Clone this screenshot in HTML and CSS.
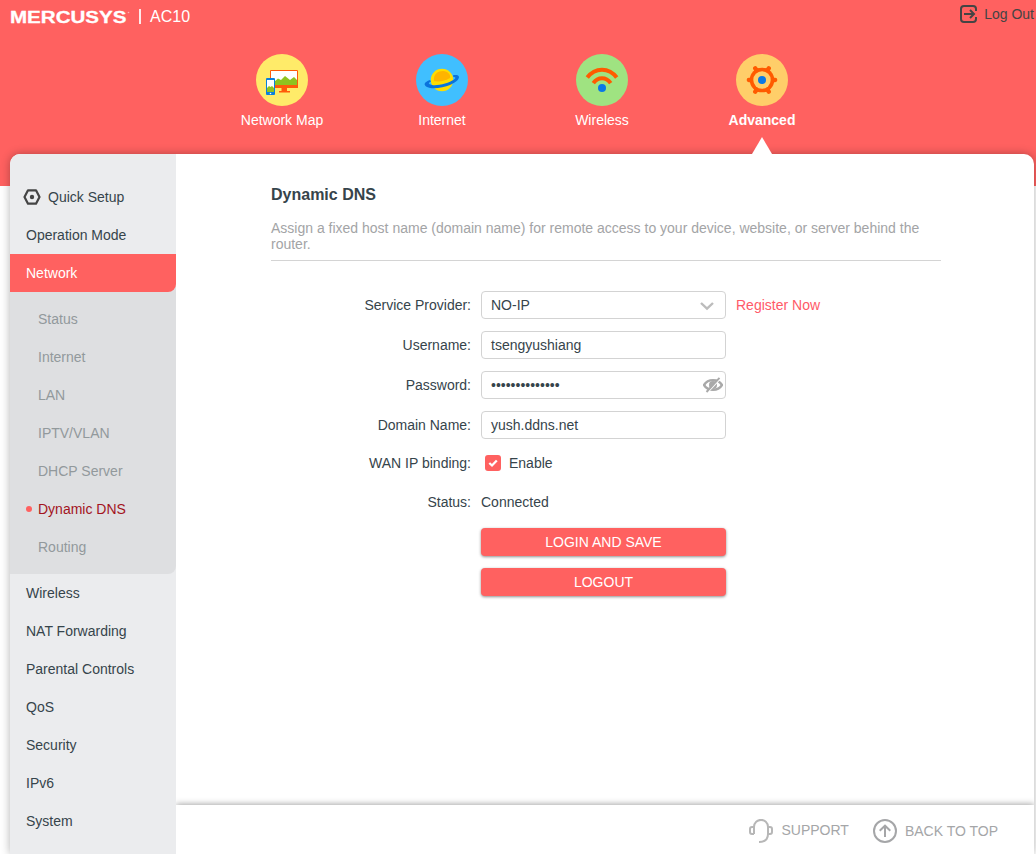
FILE: index.html
```html
<!DOCTYPE html>
<html lang="en">
<head>
<meta charset="utf-8">
<title>MERCUSYS AC10</title>
<link rel="stylesheet" href="styles.css">
</head>
<body>
<div class="page">
  <header class="header">
    <div class="topbar">
      <div class="brand">
        <svg class="logo" width="120" height="20" viewBox="0 0 120 20"><text class="logo-text" x="0" y="15.500" textLength="116.500" lengthAdjust="spacingAndGlyphs">MERCUSYS</text><circle cx="118.500" cy="5.500" r="0.800" fill="#ffb0b0"/></svg>
        <span class="divider"></span>
        <span class="model">AC10</span>
      </div>
      <a class="logout-link">
        <svg width="18" height="18" viewBox="0 0 18 18" fill="none" stroke="#444" stroke-width="2"><path d="M16 6V4Q16 1 13 1H4Q1 1 1 4V14Q1 17 4 17H13Q16 17 16 14V12M4 9H14M10 5L14 9L10 13"/></svg>
        <span>Log Out</span>
      </a>
    </div>
    <nav class="tabs">
      <a class="tab">
        <svg width="52" height="52" viewBox="0 0 52 52"><circle cx="26" cy="26" r="26" fill="#ffeb69"/><path d="M14.500 16.500H41.500V33H14.500Z" fill="#fff" stroke="#ff5b0a"/><path d="M18 31V28L22 24.500L25 26L29 22L34 26L38 23L41 26V31Z" fill="#8fc31f"/><path d="M15 31H42V34H15ZM25.500 34H31V37H34V38.500H23V37H25.500Z" fill="#ff5b0a"/><rect x="10" y="24" width="9" height="17" rx="1" fill="#0a80dc"/><rect x="11" y="26" width="7" height="12" fill="#fff"/><path d="M11 38V34L13 32L14.500 33L16 32L18 34V38Z" fill="#8fc31f"/><circle cx="14.500" cy="39.500" r=".8" fill="#fff"/></svg>
        <span>Network Map</span>
      </a>
      <a class="tab">
        <svg width="52" height="52" viewBox="0 0 52 52"><circle cx="26" cy="26" r="26" fill="#40bfff"/><circle cx="26" cy="26" r="11.200" fill="#ffdc00"/><path d="M18 27C17 20 22 17 27 17C32 17 35 21 34 24C29 27 23 28 18 27Z" fill="#ffb400"/><path d="M14 26C8 28 7 31 11 33C16 35.500 27 34 34 31C41 28 45 23.500 42 21.500C41 21 39 21 37 21.300L37.300 23C40 23 40 24 38 25.500C33 29 22 32 16 31C12 30 12 29 15 27.500Z" fill="#0a73dc"/></svg>
        <span>Internet</span>
      </a>
      <a class="tab">
        <svg width="52" height="52" viewBox="0 0 52 52"><circle cx="26" cy="26" r="26" fill="#9fe381"/><path d="M11.300 23.500C19 13 33 13 40.700 23.500M17.300 29.200C22 22.500 30 22.500 34.700 29.200" fill="none" stroke="#ff5b00" stroke-width="4"/><circle cx="26" cy="34" r="4" fill="#0a78e6"/></svg>
        <span>Wireless</span>
      </a>
      <a class="tab tab-active">
        <svg width="52" height="52" viewBox="0 0 52 52"><circle cx="26" cy="26" r="26" fill="#ffce69"/><path d="M12.800 26H14M39.200 26H38M19.200 14.300L20 15.500M32.800 14.300L32 15.500M19.200 37.700L20 36.500M32.800 37.700L32 36.500" stroke="#ff5b00" stroke-linecap="round" stroke-width="4.300"/><path d="M20 14.800H32L38.500 26L32 37.200H20L13.500 26Z" fill="#ff5b00" stroke="#ff5b00" stroke-linejoin="round"/><circle cx="26" cy="26" r="12.300" fill="#ff5b00"/><circle cx="26" cy="26" r="8.700" fill="#ffce69"/><circle cx="26" cy="26" r="4" fill="#0a78e6"/></svg>
        <span>Advanced</span>
        <i class="pointer"></i>
      </a>
    </nav>
  </header>

  <div class="panel">
    <aside class="sidebar">
      <a class="item item-icon"><svg width="18" height="18" viewBox="0 0 18 18"><path d="M5 2.300H13L16.500 9L13 15.700H5L1.500 9Z" fill="none" stroke="#444" stroke-width="2.200" stroke-linejoin="round"/><circle cx="9" cy="9" r="2.200" fill="#444"/></svg><span>Quick Setup</span></a>
      <a class="item">Operation Mode</a>
      <a class="item item-open">Network</a>
      <div class="submenu">
        <a class="subitem">Status</a>
        <a class="subitem">Internet</a>
        <a class="subitem">LAN</a>
        <a class="subitem">IPTV/VLAN</a>
        <a class="subitem">DHCP Server</a>
        <a class="subitem subitem-active"><i class="dot"></i>Dynamic DNS</a>
        <a class="subitem">Routing</a>
      </div>
      <a class="item">Wireless</a>
      <a class="item">NAT Forwarding</a>
      <a class="item">Parental Controls</a>
      <a class="item">QoS</a>
      <a class="item">Security</a>
      <a class="item">IPv6</a>
      <a class="item">System</a>
    </aside>

    <div class="main">
      <main class="content">
        <h1 class="title">Dynamic DNS</h1>
        <p class="description">Assign a fixed host name (domain name) for remote access to your device, website, or server behind the router.</p>
        <div class="form">
          <div class="row"><span class="label">Service Provider:</span><div class="field">NO-IP<svg class="chevron" width="16" height="10" viewBox="0 0 16 10"><path d="M2 2L8 7.700L14 2" fill="none" stroke="#bcbcbc" stroke-width="2.400"/></svg></div><a class="register">Register Now</a></div>
          <div class="row"><span class="label">Username:</span><div class="field">tsengyushiang</div></div>
          <div class="row"><span class="label">Password:</span><div class="field"><span>••••••••••••••</span><svg class="eye" width="20" height="16" viewBox="0 0 20 16"><path d="M1 8C5 1.500 15 1.500 19 8C15 14.500 5 14.500 1 8Z" fill="none" stroke="#a9a9a9" stroke-width="2.400"/><circle cx="10" cy="8" r="4" fill="#a9a9a9"/><path d="M4.500 15.500L17.500 1.500" stroke="#fff" stroke-width="1.500"/><path d="M3.500 15L16.500 .8" stroke="#a9a9a9" stroke-width="1.900"/></svg></div></div>
          <div class="row"><span class="label">Domain Name:</span><div class="field">yush.ddns.net</div></div>
          <div class="row row-check"><span class="label">WAN IP binding:</span><span class="checkbox"><svg width="16" height="16" viewBox="0 0 16 16"><path d="M4.300 8L7 10.500L11.800 5.500" fill="none" stroke="#fff" stroke-width="2.300"/></svg></span><span>Enable</span></div>
          <div class="row row-status"><span class="label">Status:</span><span>Connected</span></div>
          <button class="button">LOGIN AND SAVE</button>
          <button class="button">LOGOUT</button>
        </div>
      </main>
      <footer class="footer">
        <a class="footer-link"><svg width="24" height="24" viewBox="0 0 24 24" fill="none" stroke="#b7b7b7" stroke-width="2"><path d="M5 15V8C5 -1.500 19 -1.500 19 8V15C19 20 16 23 10 23M5 8H3Q1 8 1 10V13Q1 15 3 15H5M19 8H21Q23 8 23 10V13Q23 15 21 15H19"/></svg><span class="support-text">SUPPORT</span></a>
        <a class="footer-link"><svg width="24" height="24" viewBox="0 0 24 24" fill="none" stroke="#a5a6a8" stroke-width="2"><circle cx="12" cy="12" r="11"/><path d="M12 18V7M6.700 11.800L12 6.700L17.300 11.800"/></svg><span>BACK TO TOP</span></a>
      </footer>
    </div>
  </div>
</div>
</body>
</html>
```
FILE: styles.css
```css
* { box-sizing: border-box; }
body {
  margin: 0;
  background: #fff;
  color: #36444b;
  font: 14px/16px "Liberation Sans", Arial, sans-serif;
}
.page { height: 854px; overflow: hidden; }
.header { height: 186px; background: #ff6160; color: #fff; }
.topbar { display: flex; justify-content: space-between; height: 54px; padding: 0 2px 0 10px; }
.brand { display: flex; height: 33px; align-items: center; }
.logo { overflow: visible; }
.logo-text { font: bold 16px "Liberation Sans", Arial, sans-serif; fill: #fff; stroke: #fff; stroke-width: .3; }
.divider { width: 2px; height: 15px; margin: 0 9px; background: #ffe9e9; }
.model { font-size: 16px; line-height: 17px; }
.logout-link { display: flex; height: 28px; align-items: center; gap: 6px; color: #444; }
.tabs { display: flex; width: 640px; margin-left: 202px; }
.tab { position: relative; display: flex; flex-direction: column; align-items: center; width: 160px; height: 100px; gap: 6px; }
.tab-active { font-weight: bold; }
.pointer {
  position: absolute;
  z-index: 2;
  top: 83px;
  left: 70px;
  border: solid transparent;
  border-width: 0 10.500px 17px;
  border-bottom-color: #fff;
}
.panel {
  position: relative;
  display: flex;
  width: 1024px;
  height: 700px;
  margin: -32px 0 0 10px;
  border-radius: 10px 10px 0 0;
  background: #fff;
  box-shadow: 0 0 10px rgba(0, 0, 0, .3);
}
.sidebar { width: 166px; padding-top: 24px; border-radius: 10px 0 0; background: #ebecee; }
.item { display: flex; height: 38px; align-items: center; padding-left: 16px; }
.item-icon { gap: 7px; padding-left: 13px; }
.item-open { position: relative; border-radius: 0 0 8px; background: #ff6160; color: #fff; }
.submenu { margin-top: -8px; padding: 16px 0 8px; border-radius: 0 0 8px; background: #dedfe1; }
.subitem { position: relative; display: flex; height: 38px; align-items: center; padding-left: 28px; color: #92999c; }
.subitem-active { color: #a3141e; }
.dot { position: absolute; left: 16px; width: 6px; height: 6px; border-radius: 50%; background: #ff6160; }
.main { display: flex; flex: 1; flex-direction: column; }
.content { flex: 1; padding: 31px 93px 0 95px; }
.title { margin: 0; font-size: 16px; line-height: 20px; }
.description { margin: 15px 0 30px; padding-bottom: 8px; border-bottom: 1px solid #d4d4d4; color: #a3a4a6; }
.form { display: flex; flex-direction: column; gap: 12px; }
.row { display: flex; height: 28px; align-items: center; }
.label { width: 200px; margin-right: 10px; text-align: right; }
.field { position: relative; display: flex; width: 245px; height: 28px; align-items: center; padding-left: 9px; border: 1px solid #d3d3d3; border-radius: 4px; }
.chevron { position: absolute; right: 10px; top: 9px; }
.eye { position: absolute; right: 2px; top: 5px; }
.register { margin-left: 10px; color: #ff5a68; }
.row-check { height: 24px; }
.checkbox { width: 16px; height: 16px; margin: 0 8px 0 4px; border-radius: 3px; background: #ff6160; }
.checkbox svg { display: block; }
.row-status { height: 30px; margin-bottom: -1px; }
.button { width: 245px; height: 28px; margin-left: 210px; padding: 0; border: 0; border-radius: 4px; background: #ff6160; box-shadow: 0 1px 3px rgba(0, 0, 0, .45); color: #fff; font: inherit; }
.footer { display: flex; justify-content: flex-end; gap: 24px; height: 49px; padding: 2px 36px 0 0; box-shadow: 0 -1px 6px rgba(0, 0, 0, .35); color: #a5a6a8; clip-path: inset(-12px 0 0 0); }
.footer-link { display: flex; align-items: center; gap: 8px; }
.support-text { padding-bottom: 2px; }
```
